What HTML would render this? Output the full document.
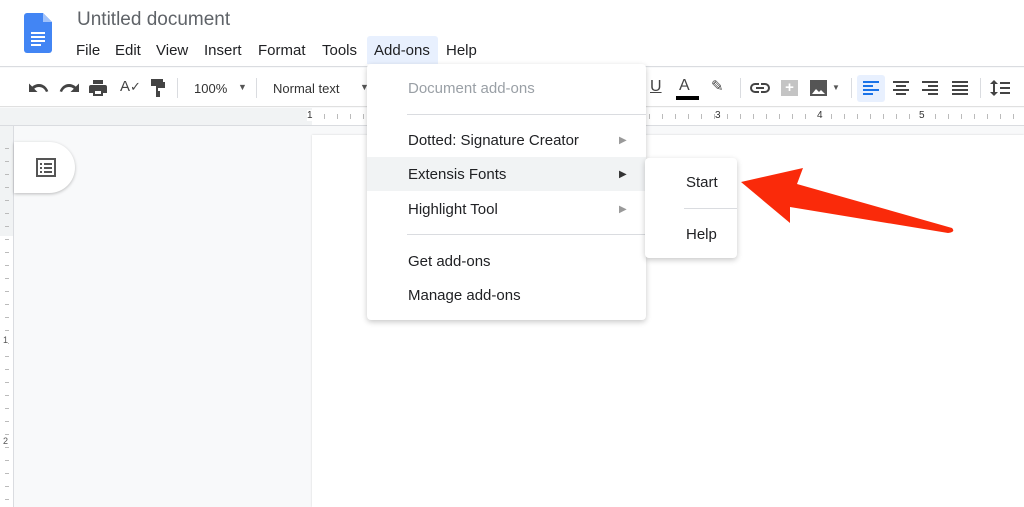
<!DOCTYPE html>
<html><head><meta charset="utf-8"><style>
*{margin:0;padding:0;box-sizing:border-box}
body{width:1024px;height:507px;overflow:hidden;position:relative;background:#f8f9fa;font-family:"Liberation Sans",Arial,sans-serif;color:#202124}
.a{position:absolute}
.t{position:absolute;white-space:nowrap}
.menu{font-size:15px}
.ic{position:absolute;fill:#444}
</style></head><body>
<div class="a" style="left:0;top:0;width:1024px;height:67px;background:#fff;border-bottom:1px solid #dadce0"></div>
<svg class="a" style="left:24px;top:13px" width="28" height="40" viewBox="0 0 28 40"><path d="M3 0h16l9 9v28a3 3 0 0 1-3 3H3a3 3 0 0 1-3-3V3a3 3 0 0 1 3-3z" fill="#4285f4"/><path d="M19 0l9 9h-9z" fill="#a1c2fa"/><rect x="7" y="19" width="14" height="2" fill="#fff"/><rect x="7" y="23" width="14" height="2" fill="#fff"/><rect x="7" y="27" width="14" height="2" fill="#fff"/><rect x="7" y="31" width="10" height="2" fill="#fff"/></svg>
<div class="t" style="left:77px;top:9px;font-size:19px;color:#5f6368">Untitled document</div>
<div class="a" style="left:367px;top:36px;width:71px;height:28px;background:#e8f0fe;border-radius:3px 3px 0 0"></div>
<div class="t menu" style="left:76px;top:42px">File</div>
<div class="t menu" style="left:115px;top:42px">Edit</div>
<div class="t menu" style="left:156px;top:42px">View</div>
<div class="t menu" style="left:204px;top:42px">Insert</div>
<div class="t menu" style="left:258px;top:42px">Format</div>
<div class="t menu" style="left:322px;top:42px">Tools</div>
<div class="t menu" style="left:374px;top:42px">Add-ons</div>
<div class="t menu" style="left:446px;top:42px">Help</div>
<!-- toolbar -->
<div class="a" style="left:0;top:68px;width:1024px;height:39px;background:#fff;border-bottom:1px solid #e0e0e0"></div>
<svg class="ic" style="left:29px;top:80px" width="20" height="16" viewBox="0 0 20 16"><path d="M10 4c-2.6 0-5 1-6.8 2.6L0 3.5V12h8.5L5.2 8.7C6.5 7.6 8.2 7 10 7c3.2 0 5.9 2 6.9 5l2.4-.8C17.9 7.1 14.3 4 10 4z"/></svg>
<svg class="ic" style="left:59px;top:80px" width="20" height="16" viewBox="0 0 20 16"><path d="M10 4c2.6 0 5 1 6.8 2.6L20 3.5V12h-8.5l3.3-3.3C13.5 7.6 11.8 7 10 7 6.8 7 4.1 9 3.1 12L.7 11.2C2.1 7.1 5.7 4 10 4z"/></svg>
<svg class="ic" style="left:89px;top:80px" width="18" height="16" viewBox="0 0 18 16"><path d="M4 0h10v4H4zM2 5h14a2 2 0 0 1 2 2v6h-4v3H4v-3H0V7a2 2 0 0 1 2-2zm4 6v3h6v-3z"/></svg>
<div class="t" style="left:120px;top:78px;font-size:15px;color:#444">A<span style="font-size:13px">✓</span></div>
<svg class="ic" style="left:150px;top:79px" width="16" height="18" viewBox="0 0 16 18"><path d="M1 0h12v3h2v6H8v3h2v6H6v-6h0V7h7V5h-0v0H13v2H1z"/></svg>
<div class="a" style="left:177px;top:78px;width:1px;height:20px;background:#dadce0"></div>
<div class="t" style="left:194px;top:81px;font-size:13px;color:#333">100%</div>
<div class="t" style="left:238px;top:82px;font-size:9px;color:#555">▼</div>
<div class="a" style="left:256px;top:78px;width:1px;height:20px;background:#dadce0"></div>
<div class="t" style="left:273px;top:81px;font-size:13px;color:#333">Normal text</div>
<div class="t" style="left:360px;top:82px;font-size:9px;color:#555">▼</div>
<div class="t" style="left:650px;top:78px;font-size:16px;color:#444;text-decoration:underline">U</div>
<div class="t" style="left:679px;top:77px;font-size:16px;color:#444">A</div>
<div class="a" style="left:676px;top:96px;width:23px;height:4px;background:#000"></div>
<div class="t" style="left:711px;top:77px;font-size:15px;color:#444">✎</div>
<div class="a" style="left:740px;top:78px;width:1px;height:20px;background:#dadce0"></div>
<svg class="ic" style="left:750px;top:82px" width="20" height="12" viewBox="0 0 20 12"><path d="M5 1h4v2H5a3 3 0 0 0 0 6h4v2H5A5 5 0 0 1 5 1zm6 0h4a5 5 0 0 1 0 10h-4V9h4a3 3 0 0 0 0-6h-4zM6 5h8v2H6z"/></svg>
<div class="a" style="left:781px;top:80px;width:17px;height:16px;background:#c4c4c4;color:#fff;font-size:15px;line-height:16px;text-align:center;font-weight:bold">+</div>
<div class="a" style="left:810px;top:80px;width:17px;height:16px;background:#555"></div>
<svg class="a" style="left:812px;top:86px" width="13" height="8"><path d="M0 8l4-5 3 3 2-2 4 4z" fill="#fff"/></svg>
<div class="t" style="left:832px;top:83px;font-size:8px;color:#555">▼</div>
<div class="a" style="left:851px;top:78px;width:1px;height:20px;background:#dadce0"></div>
<div class="a" style="left:857px;top:75px;width:28px;height:27px;background:#e8f0fe;border-radius:3px"></div>
<svg class="a" style="left:863px;top:81px" width="16" height="14"><g fill="#1a73e8"><rect y="0" width="16" height="2"/><rect y="4" width="10" height="2"/><rect y="8" width="16" height="2"/><rect y="12" width="10" height="2"/></g></svg>
<svg class="a" style="left:893px;top:81px" width="16" height="14"><g fill="#444"><rect y="0" width="16" height="2"/><rect x="3" y="4" width="10" height="2"/><rect y="8" width="16" height="2"/><rect x="3" y="12" width="10" height="2"/></g></svg>
<svg class="a" style="left:922px;top:81px" width="16" height="14"><g fill="#444"><rect y="0" width="16" height="2"/><rect x="6" y="4" width="10" height="2"/><rect y="8" width="16" height="2"/><rect x="6" y="12" width="10" height="2"/></g></svg>
<svg class="a" style="left:952px;top:81px" width="16" height="14"><g fill="#444"><rect y="0" width="16" height="2"/><rect y="4" width="16" height="2"/><rect y="8" width="16" height="2"/><rect y="12" width="16" height="2"/></g></svg>
<div class="a" style="left:980px;top:78px;width:1px;height:20px;background:#dadce0"></div>
<svg class="a" style="left:990px;top:80px" width="20" height="16"><g fill="#444"><rect x="3" y="2" width="2" height="12"/><path d="M0 4l4-4 4 4zM0 12l4 4 4-4z"/><rect x="10" y="2" width="10" height="2"/><rect x="10" y="7" width="10" height="2"/><rect x="10" y="12" width="10" height="2"/></g></svg>
<!-- ruler -->
<div class="a" style="left:0;top:108px;width:1024px;height:18px;background:#f1f3f4;border-bottom:1px solid #dadce0"></div>
<div class="a" style="left:312px;top:108px;width:712px;height:18px;background:#fff;border-bottom:1px solid #dadce0"></div>
<div class="a" style="left:312px;top:114px;width:712px;height:5px;background:repeating-linear-gradient(90deg,transparent 0 12px,#bbb 12px 13px)"></div>
<div class="t" style="left:307px;top:110px;font-size:10px;color:#333;background:#fff">1</div>
<div class="t" style="left:715px;top:110px;font-size:10px;color:#333;background:#fff">3</div>
<div class="t" style="left:817px;top:110px;font-size:10px;color:#333;background:#fff">4</div>
<div class="t" style="left:919px;top:110px;font-size:10px;color:#333;background:#fff">5</div>
<div class="a" style="left:0;top:126px;width:14px;height:381px;background:#fff;border-right:1px solid #dadce0"></div>
<div class="a" style="left:0;top:126px;width:14px;height:110px;background:#f1f3f4;border-right:1px solid #dadce0"></div>
<div class="a" style="left:5px;top:136px;width:4px;height:371px;background:repeating-linear-gradient(180deg,transparent 0 12px,#bbb 12px 13px)"></div>
<div class="t" style="left:3px;top:335px;font-size:9px;color:#555;background:#fff">1</div>
<div class="t" style="left:3px;top:436px;font-size:9px;color:#555;background:#fff">2</div>
<!-- outline button -->
<div class="a" style="left:14px;top:142px;width:61px;height:51px;background:#fff;border-radius:0 26px 26px 0;box-shadow:0 1px 3px rgba(0,0,0,.25)"></div>
<svg class="a" style="left:36px;top:158px" width="20" height="19"><rect x="1" y="1" width="18" height="17" fill="none" stroke="#555" stroke-width="2"/><g fill="#555"><rect x="4" y="5" width="2" height="2"/><rect x="8" y="5" width="8" height="2"/><rect x="4" y="9" width="2" height="2"/><rect x="8" y="9" width="8" height="2"/><rect x="4" y="13" width="2" height="2"/><rect x="8" y="13" width="8" height="2"/></g></svg>
<!-- page -->
<div class="a" style="left:312px;top:135px;width:712px;height:372px;background:#fff;box-shadow:0 0 2px rgba(0,0,0,.15)"></div>
<!-- dropdown -->
<div class="a" style="left:367px;top:64px;width:279px;height:256px;background:#fff;border-radius:4px;box-shadow:0 2px 6px rgba(0,0,0,.22)"></div>
<div class="t" style="left:408px;top:80px;font-size:15px;color:#9aa0a6">Document add-ons</div>
<div class="a" style="left:407px;top:114px;width:239px;height:1px;background:#dadce0"></div>
<div class="t" style="left:408px;top:132px;font-size:15px">Dotted: Signature Creator</div>
<div class="t" style="left:619px;top:135px;font-size:10px;color:#999">▶</div>
<div class="a" style="left:367px;top:157px;width:279px;height:34px;background:#f1f3f4"></div>
<div class="t" style="left:408px;top:166px;font-size:15px">Extensis Fonts</div>
<div class="t" style="left:619px;top:169px;font-size:10px;color:#333">▶</div>
<div class="t" style="left:408px;top:201px;font-size:15px">Highlight Tool</div>
<div class="t" style="left:619px;top:204px;font-size:10px;color:#999">▶</div>
<div class="a" style="left:407px;top:234px;width:239px;height:1px;background:#dadce0"></div>
<div class="t" style="left:408px;top:253px;font-size:15px">Get add-ons</div>
<div class="t" style="left:408px;top:287px;font-size:15px">Manage add-ons</div>
<!-- submenu -->
<div class="a" style="left:645px;top:158px;width:92px;height:100px;background:#fff;border-radius:4px;box-shadow:0 2px 6px rgba(0,0,0,.22)"></div>
<div class="t" style="left:686px;top:174px;font-size:15px">Start</div>
<div class="a" style="left:684px;top:208px;width:53px;height:1px;background:#dadce0"></div>
<div class="t" style="left:686px;top:226px;font-size:15px">Help</div>
<!-- arrow -->
<svg class="a" style="left:0;top:0" width="1024" height="507"><path d="M741 182L803 168L797 184L952 228Q956 232 948 233L790 207L790 223Z" fill="#fa2a0a"/></svg>
</body></html>
